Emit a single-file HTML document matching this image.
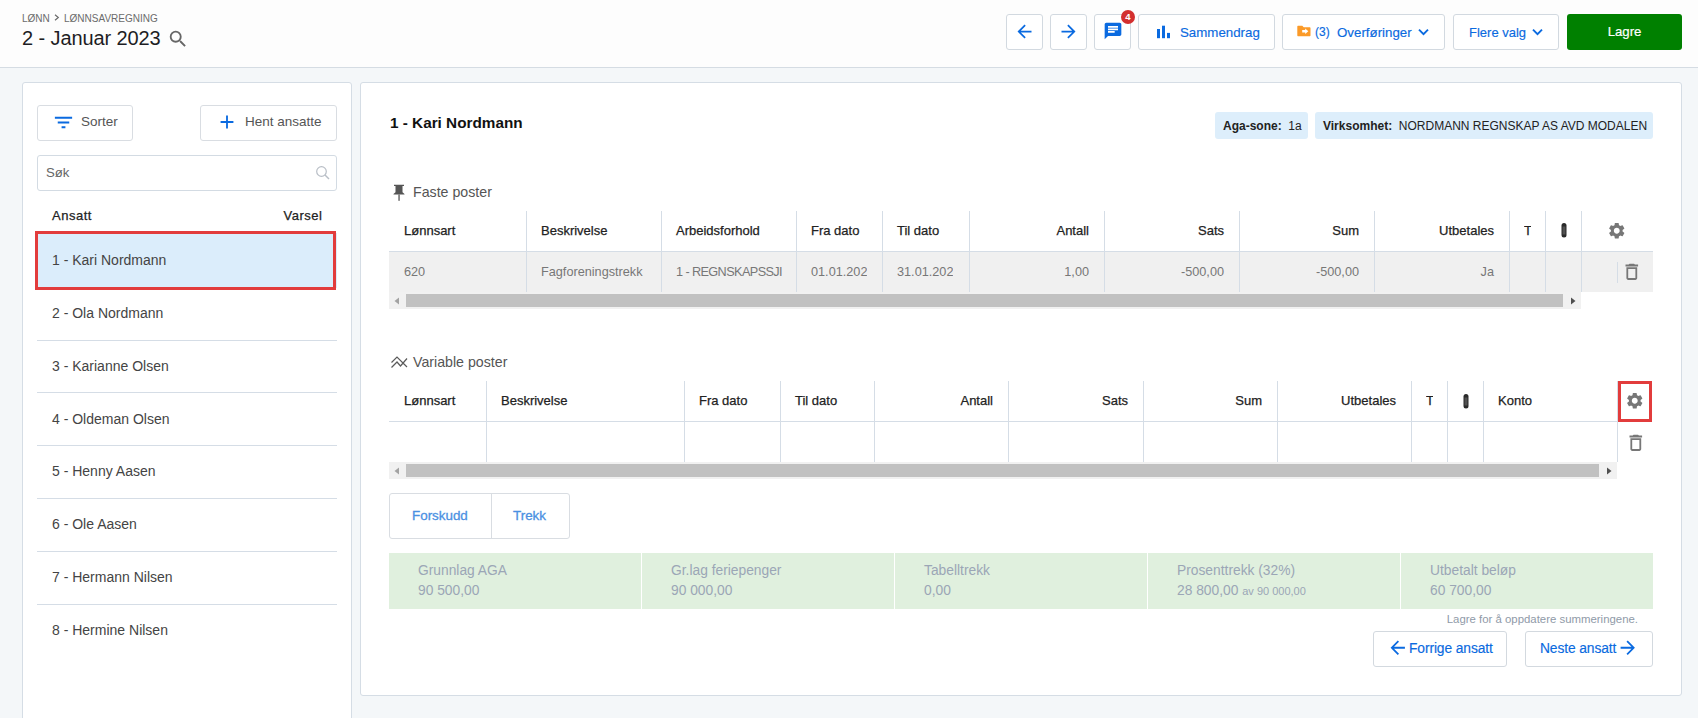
<!DOCTYPE html>
<html><head><meta charset="utf-8">
<style>
*{box-sizing:border-box;margin:0;padding:0}
html,body{width:1698px;height:718px;overflow:hidden}
body{font-family:"Liberation Sans",sans-serif;background:#f4f7f9;position:relative;color:#222}
.abs{position:absolute}
.hdr{position:absolute;left:0;top:0;width:1698px;height:68px;background:#fdfdfd;border-bottom:1px solid #d5dce3}
.crumb{position:absolute;left:22px;top:13px;font-size:10px;color:#6b6b6b;white-space:nowrap;line-height:12px}
.title{position:absolute;left:22px;top:26px;font-size:20px;letter-spacing:-0.1px;color:#1d1d24;white-space:nowrap;line-height:24px}
.btn{position:absolute;top:14px;height:36px;border:1px solid #d2d9e0;border-radius:3px;background:#fff}
.btxt{position:absolute;font-size:13.3px;color:#0a6ae0;white-space:nowrap;line-height:16px;top:9px;-webkit-text-stroke:0.15px #0a6ae0}
.lagre{position:absolute;left:1567px;top:14px;width:115px;height:36px;background:#008000;border-radius:3px;color:#fff;font-size:13.2px;-webkit-text-stroke:0.2px #fff;line-height:36px;text-align:center}
.panel{position:absolute;background:#fff;border:1px solid #d5dde5;border-radius:3px}
.lbtn{position:absolute;top:105px;height:36px;border:1px solid #d9dde2;border-radius:3px;background:#fff}
.lt{position:absolute;font-size:13.5px;color:#555;white-space:nowrap;line-height:16px;top:9px}
.row{position:absolute;left:37px;width:300px;height:53px;border-bottom:1px solid #d5dde6}
.rt{position:absolute;left:15px;top:19px;font-size:14px;color:#444;white-space:nowrap;line-height:16px}
.th{position:absolute;font-size:13px;color:#222;white-space:nowrap;line-height:16px;font-weight:normal;-webkit-text-stroke:0.25px #222}
.td{position:absolute;font-size:12.7px;color:#777;white-space:nowrap;line-height:16px}
.vl{position:absolute;width:1px;background:#d5dde6}
.hl{position:absolute;height:1px;background:#d5dde6}
.sumcell{position:absolute;top:553px;height:56px;background:#e0f0de}
.sl{position:absolute;margin-top:1px;font-size:13.8px;color:#9ba6b6;white-space:nowrap;line-height:16px}
</style></head><body>

<div class="hdr">
  <div class="crumb">LØNN</div><svg class="abs" style="left:54px;top:14px" width="6" height="7" viewBox="0 0 6 7"><path d="M1 0.8L4.3 3.5 1 6.2" fill="none" stroke="#6b6b6b" stroke-width="1.2"/></svg><div class="crumb" style="left:64px">LØNNSAVREGNING</div>
  <div class="title">2 - Januar 2023</div>
  <svg class="abs" style="left:167px;top:28px" width="22" height="22" viewBox="0 0 24 24"><path fill="#666" d="M15.5 14h-.79l-.28-.27A6.47 6.47 0 0 0 16 9.5 6.5 6.5 0 1 0 9.5 16c1.61 0 3.09-.59 4.23-1.57l.27.28v.79l5 4.99L20.49 19l-4.99-5zm-6 0C7.01 14 5 11.99 5 9.5S7.01 5 9.5 5 14 7.01 14 9.5 11.99 14 9.5 14z"/></svg>

  <div class="btn" style="left:1006px;width:37px"></div>
  <svg class="abs" style="left:1014px;top:21px" width="21" height="21" viewBox="0 0 24 24"><path fill="#0a6ae0" d="M20 11H7.83l5.59-5.59L12 4l-8 8 8 8 1.41-1.41L7.83 13H20v-2z"/></svg>
  <div class="btn" style="left:1050px;width:37px"></div>
  <svg class="abs" style="left:1058px;top:21px" width="21" height="21" viewBox="0 0 24 24"><path fill="#0a6ae0" d="M12 4l-1.41 1.41L16.17 11H4v2h12.17l-5.58 5.59L12 20l8-8z"/></svg>
  <div class="btn" style="left:1094px;width:37px"></div>
  <svg class="abs" style="left:1103px;top:21px" width="20" height="20" viewBox="0 0 24 24"><path fill="#0a6ae0" d="M20 2H4c-1.1 0-1.99.9-1.99 2L2 22l4-4h14c1.1 0 2-.9 2-2V4c0-1.1-.9-2-2-2zM6 9h12v2H6V9zm8 5H6v-2h8v2zm4-6H6V6h12v2z"/></svg>
  <div class="abs" style="left:1121px;top:10px;width:14px;height:14px;border-radius:7px;background:#d32f2f;color:#fff;font-size:9.5px;font-weight:bold;line-height:14px;text-align:center">4</div>

  <div class="btn" style="left:1138px;width:137px"></div>
  <svg class="abs" style="left:1150px;top:20px" width="24" height="24" viewBox="0 0 24 24"><rect x="7" y="9" width="3" height="9.2" fill="#0a6ae0"/><rect x="12" y="5.7" width="3" height="12.5" fill="#0a6ae0"/><rect x="17" y="12.9" width="3" height="5.3" fill="#0a6ae0"/></svg>
  <div class="btxt" style="left:1180px;top:25px">Sammendrag</div>

  <div class="btn" style="left:1282px;width:163px"></div>
  <svg class="abs" style="left:1297px;top:25px" width="14" height="12" viewBox="0 0 14 12"><path fill="#fb9a28" d="M1.3 0.8h4l1.4 1.4h5.8c.6 0 1 .4 1 1v7.1c0 .6-.4 1-1 1H1.3c-.6 0-1-.4-1-1V1.8c0-.6.4-1 1-1z"/><path fill="#fff" d="M5.2 5h3V3.4l3.1 2.8-3.1 2.8V7.5h-3z"/></svg>
  <div class="btxt" style="left:1315px;top:24px;font-size:12px">(3)</div>
  <div class="btxt" style="left:1337px;top:25px">Overføringer</div>
  <svg class="abs" style="left:1417px;top:26px" width="13" height="13" viewBox="0 0 13 13"><path fill="none" stroke="#0a6ae0" stroke-width="1.9" d="M2 3.6l4.5 4.5L11 3.6"/></svg>

  <div class="btn" style="left:1453px;width:106px"></div>
  <div class="btxt" style="left:1469px;top:25px;font-size:13px">Flere valg</div>
  <svg class="abs" style="left:1531px;top:26px" width="13" height="13" viewBox="0 0 13 13"><path fill="none" stroke="#0a6ae0" stroke-width="1.9" d="M2 3.6l4.5 4.5L11 3.6"/></svg>

  <div class="lagre">Lagre</div>
</div>

<!-- Left panel -->
<div class="panel" style="left:22px;top:82px;width:330px;height:660px"></div>
<div class="lbtn" style="left:37px;width:96px"></div>
<svg class="abs" style="left:52px;top:111px" width="23" height="23" viewBox="0 0 24 24"><path fill="#0a6ae0" d="M10 18h4v-2h-4v2zM3 6v2h18V6H3zm3 7h12v-2H6v2z"/></svg>
<div class="lt" style="left:81px;top:114px">Sorter</div>
<div class="lbtn" style="left:200px;width:137px"></div>
<svg class="abs" style="left:216px;top:111px" width="22" height="22" viewBox="0 0 24 24"><path fill="#0a6ae0" d="M19 13h-6v6h-2v-6H5v-2h6V5h2v6h6v2z"/></svg>
<div class="lt" style="left:245px;top:114px">Hent ansatte</div>
<div class="abs" style="left:37px;top:155px;width:300px;height:36px;border:1px solid #d3dbe3;border-radius:3px;background:#fff"></div>
<div class="abs" style="left:46px;top:165px;font-size:13.2px;color:#666;line-height:16px">Søk</div>
<svg class="abs" style="left:314.5px;top:165px" width="16" height="16" viewBox="0 0 16 16"><circle cx="6.5" cy="6.5" r="4.8" fill="none" stroke="#b8bec6" stroke-width="1.2"/><path d="M10 10l4 4" stroke="#b8bec6" stroke-width="1.4"/></svg>
<div class="th" style="left:52px;top:208px;letter-spacing:0.5px">Ansatt</div>
<div class="th" style="right:1376px;top:208px;letter-spacing:0.5px;margin-right:-0.5px">Varsel</div>

<div class="abs" style="left:37px;top:233px;width:300px;height:55px;background:#dbedfb"></div>
<div class="abs" style="left:35px;top:231px;width:301px;height:59px;border:3px solid #e23c3c"></div>
<div class="hl" style="left:37px;top:340px;width:300px"></div>
<div class="hl" style="left:37px;top:392px;width:300px"></div>
<div class="hl" style="left:37px;top:445px;width:300px"></div>
<div class="hl" style="left:37px;top:498px;width:300px"></div>
<div class="hl" style="left:37px;top:551px;width:300px"></div>
<div class="hl" style="left:37px;top:604px;width:300px"></div>
<div class="rt" style="left:52px;top:252px">1 - Kari Nordmann</div>
<div class="rt" style="left:52px;top:305px">2 - Ola Nordmann</div>
<div class="rt" style="left:52px;top:358px">3 - Karianne Olsen</div>
<div class="rt" style="left:52px;top:411px">4 - Oldeman Olsen</div>
<div class="rt" style="left:52px;top:463px">5 - Henny Aasen</div>
<div class="rt" style="left:52px;top:516px">6 - Ole Aasen</div>
<div class="rt" style="left:52px;top:569px">7 - Hermann Nilsen</div>
<div class="rt" style="left:52px;top:622px">8 - Hermine Nilsen</div>

<!-- Main panel -->
<div class="panel" style="left:360px;top:82px;width:1322px;height:614px"></div>
<div class="abs" style="left:390px;top:114px;font-size:15.3px;font-weight:bold;color:#111;line-height:18px;white-space:nowrap">1 - Kari Nordmann</div>
<div class="abs" style="left:1215px;top:112px;width:93px;height:27px;background:#ddeefb;border-radius:3px"></div>
<div class="abs" style="left:1223px;top:119px;font-size:12px;color:#222;line-height:14px;white-space:nowrap"><b>Aga-sone:</b>&nbsp; 1a</div>
<div class="abs" style="left:1315px;top:112px;width:338px;height:27px;background:#ddeefb;border-radius:3px"></div>
<div class="abs" style="left:1323px;top:119px;font-size:12px;color:#222;line-height:14px;white-space:nowrap"><b>Virksomhet:</b>&nbsp; NORDMANN REGNSKAP AS AVD MODALEN</div>

<!-- Faste poster -->
<svg class="abs" style="left:390px;top:182px" width="18" height="21" viewBox="0 0 18 21"><path fill="#555" d="M4 2.7h10v1.3h-1.5v6.3l2 1.7v0.5H3.5v-0.5l2-1.7V4H4z"/><rect x="8.4" y="12.5" width="1.3" height="6.3" fill="#555"/></svg>
<div class="abs" style="left:413px;top:184px;font-size:14.2px;color:#555;line-height:16px;white-space:nowrap">Faste poster</div>

<!--TABLES-->
<div class="abs" style="left:389px;top:252px;width:1264px;height:40px;background:#f0f0f0"></div>
<div class="hl" style="left:389px;top:251px;width:1264px"></div>
<div class="vl" style="left:526px;top:211px;height:81px"></div>
<div class="vl" style="left:661px;top:211px;height:81px"></div>
<div class="vl" style="left:796px;top:211px;height:81px"></div>
<div class="vl" style="left:882px;top:211px;height:81px"></div>
<div class="vl" style="left:969px;top:211px;height:81px"></div>
<div class="vl" style="left:1104px;top:211px;height:81px"></div>
<div class="vl" style="left:1239px;top:211px;height:81px"></div>
<div class="vl" style="left:1374px;top:211px;height:81px"></div>
<div class="vl" style="left:1509px;top:211px;height:81px"></div>
<div class="vl" style="left:1545px;top:211px;height:81px"></div>
<div class="vl" style="left:1581px;top:211px;height:81px"></div>
<div class="th" style="left:404px;top:223px">Lønnsart</div>
<div class="th" style="left:541px;top:223px">Beskrivelse</div>
<div class="th" style="left:676px;top:223px">Arbeidsforhold</div>
<div class="th" style="left:811px;top:223px">Fra dato</div>
<div class="th" style="left:897px;top:223px">Til dato</div>
<div class="th" style="right:609px;top:223px">Antall</div>
<div class="th" style="right:474px;top:223px">Sats</div>
<div class="th" style="right:339px;top:223px">Sum</div>
<div class="th" style="right:204px;top:223px">Utbetales</div>
<div class="th" style="left:1524px;width:7px;overflow:hidden;top:223px">T</div>
<div class="td" style="left:404px;top:264px;max-width:108px;overflow:hidden">620</div>
<div class="td" style="left:541px;top:264px;max-width:106px;overflow:hidden">Fagforeningstrekk</div>
<div class="td" style="left:676px;top:264px;max-width:106px;overflow:hidden"><span style="letter-spacing:-0.6px">1 - REGNSKAPSSJI</span></div>
<div class="td" style="left:811px;top:264px;max-width:57px;overflow:hidden">01.01.202</div>
<div class="td" style="left:897px;top:264px;max-width:58px;overflow:hidden">31.01.202</div>
<div class="td" style="right:609px;top:264px">1,00</div>
<div class="td" style="right:474px;top:264px">-500,00</div>
<div class="td" style="right:339px;top:264px">-500,00</div>
<div class="td" style="right:204px;top:264px">Ja</div>
<div class="abs" style="left:389px;top:292px;width:1192px;height:17px;background:#f1f1f1"></div>
<div class="abs" style="left:406px;top:294px;width:1157px;height:13px;background:#c1c1c1"></div>
<svg class="abs" style="left:393px;top:296.5px" width="8" height="8" viewBox="0 0 8 8"><path d="M6 0.5v7L1.5 4z" fill="#a3a3a3"/></svg>
<svg class="abs" style="left:1569px;top:296.5px" width="8" height="8" viewBox="0 0 8 8"><path d="M2 0.5v7L6.5 4z" fill="#505050"/></svg>
<svg class="abs" style="left:1560px;top:222px" width="8" height="16" viewBox="0 0 8 16"><rect x="1.5" y="1" width="5" height="14.5" rx="2.5" fill="#2a2a2a"/><path d="M3.2 4.5v8M4.8 4.5v8" stroke="#9a9a9a" stroke-width="0.5"/></svg>
<svg class="abs" style="left:1606.8px;top:221px" width="19.5" height="19.5" viewBox="0 0 24 24"><path fill="#777" d="M19.14 12.94c.04-.3.06-.61.06-.94 0-.32-.02-.64-.07-.94l2.03-1.58a.49.49 0 0 0 .12-.61l-1.92-3.32a.488.488 0 0 0-.59-.22l-2.39.96c-.5-.38-1.03-.7-1.62-.94l-.36-2.54a.484.484 0 0 0-.48-.41h-3.84c-.24 0-.43.17-.47.41l-.36 2.54c-.59.24-1.13.57-1.62.94l-2.39-.96c-.22-.08-.47 0-.59.22L2.74 8.87c-.12.21-.08.47.12.61l2.03 1.58c-.05.3-.09.63-.09.94s.02.64.07.94l-2.03 1.58a.49.49 0 0 0-.12.61l1.92 3.32c.12.22.37.29.59.22l2.39-.96c.5.38 1.03.7 1.62.94l.36 2.54c.05.24.24.41.48.41h3.84c.24 0 .44-.17.47-.41l.36-2.54c.59-.24 1.13-.56 1.62-.94l2.39.96c.22.08.47 0 .59-.22l1.92-3.32c.12-.22.07-.47-.12-.61l-2.01-1.58zM12 15.6c-1.98 0-3.6-1.62-3.6-3.6s1.62-3.6 3.6-3.6 3.6 1.62 3.6 3.6-1.62 3.6-3.6 3.6z"/></svg>
<svg class="abs" style="left:1621.3px;top:261.3px" width="21.6" height="21.6" viewBox="0 0 24 24"><path fill="#777" d="M6 19c0 1.1.9 2 2 2h8c1.1 0 2-.9 2-2V7H6v12zM8 9h8v10H8V9zm7.5-5l-1-1h-5l-1 1H5v2h14V4z"/></svg>
<div class="vl" style="left:1617px;top:262px;height:21px"></div>
<div class="hl" style="left:389px;top:421px;width:1229px"></div>
<div class="vl" style="left:486px;top:381px;height:81px"></div>
<div class="vl" style="left:684px;top:381px;height:81px"></div>
<div class="vl" style="left:780px;top:381px;height:81px"></div>
<div class="vl" style="left:874px;top:381px;height:81px"></div>
<div class="vl" style="left:1008px;top:381px;height:81px"></div>
<div class="vl" style="left:1143px;top:381px;height:81px"></div>
<div class="vl" style="left:1277px;top:381px;height:81px"></div>
<div class="vl" style="left:1411px;top:381px;height:81px"></div>
<div class="vl" style="left:1447px;top:381px;height:81px"></div>
<div class="vl" style="left:1483px;top:381px;height:81px"></div>
<div class="th" style="left:404px;top:393px">Lønnsart</div>
<div class="th" style="left:501px;top:393px">Beskrivelse</div>
<div class="th" style="left:699px;top:393px">Fra dato</div>
<div class="th" style="left:795px;top:393px">Til dato</div>
<div class="th" style="right:705px;top:393px">Antall</div>
<div class="th" style="right:570px;top:393px">Sats</div>
<div class="th" style="right:436px;top:393px">Sum</div>
<div class="th" style="right:302px;top:393px">Utbetales</div>
<div class="th" style="left:1426px;width:7px;overflow:hidden;top:393px">T</div>
<div class="th" style="left:1498px;top:393px">Konto</div>
<div class="abs" style="left:389px;top:462px;width:1228px;height:17px;background:#f1f1f1"></div>
<div class="abs" style="left:406px;top:464px;width:1193px;height:13px;background:#c1c1c1"></div>
<svg class="abs" style="left:393px;top:466.5px" width="8" height="8" viewBox="0 0 8 8"><path d="M6 0.5v7L1.5 4z" fill="#a3a3a3"/></svg>
<svg class="abs" style="left:1605px;top:466.5px" width="8" height="8" viewBox="0 0 8 8"><path d="M2 0.5v7L6.5 4z" fill="#505050"/></svg>
<div class="vl" style="left:1617px;top:381px;height:81px"></div>
<svg class="abs" style="left:1462px;top:393px" width="8" height="16" viewBox="0 0 8 16"><rect x="1.5" y="1" width="5" height="14.5" rx="2.5" fill="#2a2a2a"/><path d="M3.2 4.5v8M4.8 4.5v8" stroke="#9a9a9a" stroke-width="0.5"/></svg>
<svg class="abs" style="left:1625.2px;top:391.2px" width="19.5" height="19.5" viewBox="0 0 24 24"><path fill="#777" d="M19.14 12.94c.04-.3.06-.61.06-.94 0-.32-.02-.64-.07-.94l2.03-1.58a.49.49 0 0 0 .12-.61l-1.92-3.32a.488.488 0 0 0-.59-.22l-2.39.96c-.5-.38-1.03-.7-1.62-.94l-.36-2.54a.484.484 0 0 0-.48-.41h-3.84c-.24 0-.43.17-.47.41l-.36 2.54c-.59.24-1.13.57-1.62.94l-2.39-.96c-.22-.08-.47 0-.59.22L2.74 8.87c-.12.21-.08.47.12.61l2.03 1.58c-.05.3-.09.63-.09.94s.02.64.07.94l-2.03 1.58a.49.49 0 0 0-.12.61l1.92 3.32c.12.22.37.29.59.22l2.39-.96c.5.38 1.03.7 1.62.94l.36 2.54c.05.24.24.41.48.41h3.84c.24 0 .44-.17.47-.41l.36-2.54c.59-.24 1.13-.56 1.62-.94l2.39.96c.22.08.47 0 .59-.22l1.92-3.32c.12-.22.07-.47-.12-.61l-2.01-1.58zM12 15.6c-1.98 0-3.6-1.62-3.6-3.6s1.62-3.6 3.6-3.6 3.6 1.62 3.6 3.6-1.62 3.6-3.6 3.6z"/></svg>
<svg class="abs" style="left:1624.5px;top:431.7px" width="21.6" height="21.6" viewBox="0 0 24 24"><path fill="#777" d="M6 19c0 1.1.9 2 2 2h8c1.1 0 2-.9 2-2V7H6v12zM8 9h8v10H8V9zm7.5-5l-1-1h-5l-1 1H5v2h14V4z"/></svg>
<div class="abs" style="left:1618px;top:381px;width:34px;height:41px;border:3px solid #e23c3c"></div>
<!--/TABLES-->

<!-- Variable poster title -->
<svg class="abs" style="left:389px;top:354px" width="20" height="16" viewBox="0 0 20 16"><path fill="none" stroke="#5a5a5a" stroke-width="1.2" d="M2.5 8.5L8 3l10 10M2.5 13.5L8 8l3.5 4L18 4.5"/></svg>
<div class="abs" style="left:413px;top:354px;font-size:14.2px;color:#555;line-height:16px;white-space:nowrap">Variable poster</div>

<!-- Forskudd / Trekk -->
<div class="abs" style="left:389px;top:493px;width:181px;height:46px;border:1px solid #d9dde2;border-radius:3px;background:#fff"></div>
<div class="vl" style="left:491px;top:494px;height:44px;background:#d9dde2"></div>
<div class="abs" style="left:412px;top:508px;font-size:13.4px;color:#4a90e2;line-height:16px;-webkit-text-stroke:0.3px #4a90e2">Forskudd</div>
<div class="abs" style="left:513px;top:508px;font-size:13.4px;color:#4a90e2;line-height:16px;-webkit-text-stroke:0.3px #4a90e2">Trekk</div>

<!-- Summary -->
<div class="sumcell" style="left:389px;width:252px"></div>
<div class="sumcell" style="left:642px;width:252px"></div>
<div class="sumcell" style="left:895px;width:252px"></div>
<div class="sumcell" style="left:1148px;width:252px"></div>
<div class="sumcell" style="left:1401px;width:252px"></div>
<div class="sl" style="left:418px;top:562px">Grunnlag AGA</div>
<div class="sl" style="left:418px;top:582px">90 500,00</div>
<div class="sl" style="left:671px;top:562px">Gr.lag feriepenger</div>
<div class="sl" style="left:671px;top:582px">90 000,00</div>
<div class="sl" style="left:924px;top:562px">Tabelltrekk</div>
<div class="sl" style="left:924px;top:582px">0,00</div>
<div class="sl" style="left:1177px;top:562px">Prosenttrekk (32%)</div>
<div class="sl" style="left:1177px;top:582px">28 800,00 <span style="font-size:11px">av 90 000,00</span></div>
<div class="sl" style="left:1430px;top:562px">Utbetalt beløp</div>
<div class="sl" style="left:1430px;top:582px">60 700,00</div>
<div class="abs" style="right:60px;top:612px;font-size:11.4px;color:#8f9aa8;line-height:14px;white-space:nowrap">Lagre for å oppdatere summeringene.</div>

<!-- Nav buttons -->
<div class="abs" style="left:1373px;top:631px;width:134px;height:36px;border:1px solid #d3d9df;border-radius:3px;background:#fff"></div>
<svg class="abs" style="left:1387px;top:637px" width="21.5" height="21.5" viewBox="0 0 24 24"><path fill="#0a6ae0" d="M20 11H7.83l5.59-5.59L12 4l-8 8 8 8 1.41-1.41L7.83 13H20v-2z"/></svg>
<div class="abs" style="left:1409px;top:641px;font-size:13.8px;letter-spacing:-0.1px;color:#0a6ae0;line-height:16px;white-space:nowrap;-webkit-text-stroke:0.15px #0a6ae0">Forrige ansatt</div>
<div class="abs" style="left:1525px;top:631px;width:128px;height:36px;border:1px solid #d3d9df;border-radius:3px;background:#fff"></div>
<div class="abs" style="left:1540px;top:641px;font-size:13.8px;letter-spacing:-0.1px;color:#0a6ae0;line-height:16px;white-space:nowrap;-webkit-text-stroke:0.15px #0a6ae0">Neste ansatt</div>
<svg class="abs" style="left:1617px;top:637px" width="21.5" height="21.5" viewBox="0 0 24 24"><path fill="#0a6ae0" d="M12 4l-1.41 1.41L16.17 11H4v2h12.17l-5.58 5.59L12 20l8-8z"/></svg>

</body></html>
